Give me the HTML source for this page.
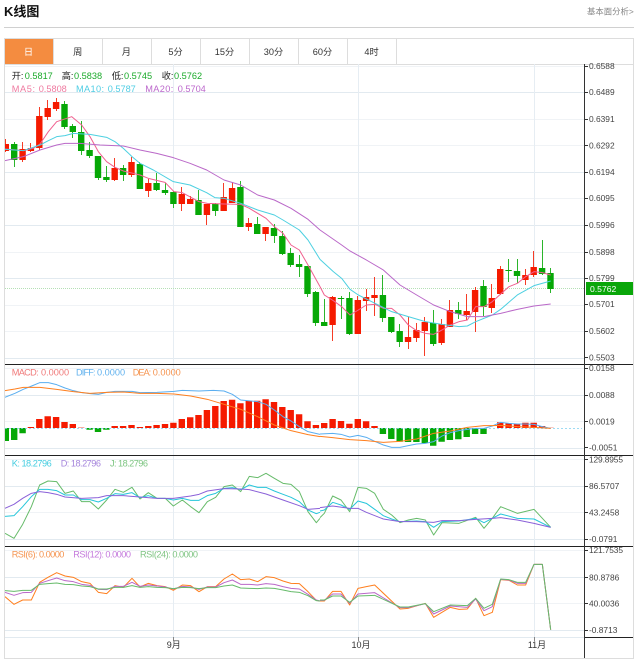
<!DOCTYPE html>
<html lang="zh"><head><meta charset="utf-8"><title>K线图</title>
<style>
html,body{margin:0;padding:0;background:#fff;width:637px;height:663px;overflow:hidden}
svg{position:absolute;left:0;top:0;display:block}
text{font-family:"Liberation Sans","Noto Sans CJK SC",sans-serif}
.ax text{font-size:8.4px;fill:#444}
.lg text{font-size:9.2px}
.tb text{font-size:9.2px;fill:#333;text-anchor:middle}
polyline{fill:none;stroke-width:1;vector-effect:non-scaling-stroke;stroke-linejoin:round}
</style></head><body>
<svg width="637" height="663" viewBox="0 0 637 663" xmlns="http://www.w3.org/2000/svg">
<defs><clipPath id="c"><rect x="5" y="64" width="579" height="574"/></clipPath></defs>
<text x="4" y="16" font-size="13" font-weight="bold" fill="#111">K线图</text>
<text x="587" y="14.5" font-size="8.4" fill="#888">基本面分析&gt;</text>
<path d="M4 27.5H634" stroke="#d0d0d0"/>

<!-- tabs -->
<rect x="4.5" y="38.5" width="629" height="26" fill="#fff" stroke="#ddd"/>
<rect x="5" y="39" width="48" height="25" fill="#f48c40"/>
<path d="M53.5 39V64M102.5 39V64M151.5 39V64M200.5 39V64M249.5 39V64M298.5 39V64M347.5 39V64M396.5 39V64" stroke="#ddd"/>
<g class="tb">
<text x="28.5" y="55.2" style="fill:#fff">日</text>
<text x="77.7" y="55.2">周</text><text x="126.3" y="55.2">月</text><text x="175.5" y="55.2">5分</text>
<text x="224.5" y="55.2">15分</text><text x="273.5" y="55.2">30分</text><text x="322.5" y="55.2">60分</text><text x="371.5" y="55.2">4时</text>
</g>

<!-- frame -->
<path d="M4.5 64V658.5H633.5V64" fill="none" stroke="#ddd"/>

<!-- grid -->
<path d="M5 92.5H584M5 172.5H584M5 225.5H584M5 278.5H584M5 358.5H584M5 395.5H584M5 448.5H584M5 486.5H584M5 539.5H584M5 577.5H584M5 630.5H584M5 637.5H584" stroke="#e2eaf0"/>
<path d="M5 66.5H584M5 119.5H584M5 145.5H584M5 198.5H584M5 252.5H584M5 305.5H584M5 331.5H584M5 368.5H584M5 421.5H584M5 459.5H584M5 512.5H584M5 550.5H584M5 603.5H584" stroke="#f0f3f6"/>
<path d="M173.5 64V637M358.5 64V637M534.5 64V637" stroke="#e6edf3"/>

<!-- dotted last price -->
<path d="M5 288.5H584" stroke="#b5e0b5" stroke-dasharray="1 1"/>

<g clip-path="url(#c)">
<!-- red wicks -->
<path stroke="#f51a00" stroke-width="1" fill="none" d="M5.5 139V152M22.5 142V162M30.5 143V152M39.5 107V150M47.5 100V120M56.5 98V111M114.5 158V181M131.5 157V177M148.5 179V197M181.5 187V211M190.5 196V204M206.5 204V225M223.5 183V211M232.5 182V203M248.5 218V231M265.5 227V241M332.5 296V341M357.5 296V334M366.5 289V311M374.5 277V316M408.5 317V349M416.5 323V342M424.5 317V356M441.5 319V345M449.5 300V327M466.5 294V320M475.5 287V332M491.5 284V313M500.5 266V295M525.5 269V285M533.5 251V277" opacity=".85"/>
<!-- red bodies -->
<path stroke="#f51a00" stroke-width="6.4" fill="none" d="M5.8 144V151M22.6 149V160M30.9 148V151M39.3 116V148M47.7 108V117M56.1 102V109M114.7 168V180M131.5 162V175M148.3 183V191M181.8 194V204M190.2 199V204M206.9 204V215M223.7 197V211M232.1 188V203M248.8 223V227M265.6 227V234M332.6 297V325M357.8 300V334M366.1 297V301M374.5 295V298M408 337V342M416.4 330V338M424.8 322V331M441.6 324V343M449.9 310V327M466.7 311V315M475.1 290V312M491.8 298V308M500.2 269V294M525.4 275V280M533.7 267V275"/>
<!-- green wicks -->
<path stroke="#06a806" stroke-width="1" fill="none" d="M14.5 142V167M64.5 101V129M72.5 124V138M81.5 121V155M89.5 142V158M98.5 156V180M106.5 166V182M123.5 165V181M139.5 162V189M156.5 173V191M165.5 183V195M173.5 191V208M198.5 190V215M215.5 203V216M240.5 181V227M257.5 217V234M274.5 224V243M282.5 231V255M290.5 248V267M299.5 255V277M307.5 266V297M315.5 291V326M324.5 299V326M341.5 296V319M349.5 292V335M382.5 275V322M391.5 317V333M399.5 324V347M433.5 310V346M458.5 302V319M483.5 280V316M508.5 259V282M517.5 259V283M542.5 240V275M550.5 268V293" opacity=".85"/>
<!-- green bodies -->
<path stroke="#06a806" stroke-width="6.4" fill="none" d="M14.2 144V160M64.5 104V127M72.8 126V132M81.2 132V151M89.6 150V156M98 156V178M106.4 177V180M123.1 168V175M139.9 164V189M156.6 183V190M165 190V193M173.4 192V204M198.5 200V215M215.3 204V211M240.4 187V227M257.2 224V234M274 228V236M282.3 236V254M290.7 253V265M299.1 264V267M307.5 266V294M315.9 292V323M324.2 322V326M341 298V299M349.4 298V334M382.9 295V318M391.3 317V332M399.7 331V342M433.2 323V344M458.3 310V314M483.5 286V307M508.6 270V271M517 271V276M542.1 268V274M550.5 273V289"/>

<!-- MA lines -->
<g transform="scale(.33333)">
<polyline stroke="#f0608f" points="15,447 70,452 100,445 120,432 145,395 170,365 215,350 245,375 270,410 295,455 320,485 345,502 370,513 420,525 445,535 495,547 522,575 547,578 597,605 622,610 672,612 722,613 748,625 798,655 823,680 849,700 873,735 898,750 924,795 960,860"/>
<polyline stroke="#4dd0e1" points="15,448 70,452 120,435 145,422 170,410 195,407 220,400 270,403 320,412 345,425 370,445 396,470 420,490 460,510 520,545 570,555 620,578 645,593 672,595 722,610 773,630 823,645 849,660 898,690 924,720 960,778"/>
<polyline stroke="#ba68c8" points="15,482 70,470 120,450 170,435 195,430 240,430 300,435 370,438 420,450 470,460 520,473 570,490 620,510 672,540 722,555 773,585 823,600 873,625 924,658 960,690"/>
</g>
<g transform="translate(320,170) scale(.33333)">
<polyline stroke="#f0608f" points="0,350 13,375 40,392 65,410 90,435 115,420 139,405 165,403 190,415 215,415 240,435 265,465 290,482 316,490 341,493 366,480 391,465 417,455 442,450 467,410 492,410 517,395 542,372 567,350 592,340 617,320 642,305 667,308 692,315"/>
<polyline stroke="#4dd0e1" points="0,268 40,305 65,325 90,358 115,375 165,400 215,425 265,440 316,455 366,463 417,470 442,468 467,455 517,435 542,418 592,375 642,347 692,333"/>
<polyline stroke="#ba68c8" points="0,180 65,225 90,243 139,270 190,300 240,345 290,375 341,405 391,425 442,440 492,440 542,430 592,418 642,408 692,402"/>
</g>

<!-- MACD bars -->
<path stroke="#f51a00" stroke-width="6.4" fill="none" d="M30.9 427V428M39.3 419V428M47.7 416.3V428M56.1 417V428M64.5 422V428M72.8 424V428M81.2 427.6V428M114.7 426V428M123.1 426V428M131.5 425V428M139.9 427V428M148.3 426V428M156.6 425V428M165 424V428M173.4 422.7V428M181.8 419V428M190.2 417.3V428M198.5 415V428M206.9 410V428M215.3 406V428M223.7 401V428M232.1 399.7V428M240.4 403.3V428M248.8 401V428M257.2 400.7V428M265.6 399.3V428M274 402V428M282.3 407V428M290.7 410V428M299.1 414.3V428M307.5 421.3V428M315.9 425V428M324.2 423V428M332.6 419V428M341 421V428M349.4 423.7V428M357.8 419V428M366.1 421.3V428M374.5 426V428M500.2 422.3V428M508.6 423V428M517 423.7V428M525.4 422.7V428M533.7 422.7V428M542.1 426V428M550.5 427.7V428"/>
<path stroke="#06a806" stroke-width="6.4" fill="none" d="M5.8 428V441M14.2 428V440M22.6 428V433.3M89.6 428V429.7M98 428V432M106.4 428V429.7M382.9 428V434M391.3 428V439M399.7 428V441.7M408 428V442M416.4 428V442M424.8 428V443M433.2 428V445.7M441.6 428V441.7M449.9 428V440M458.3 428V439.3M466.7 428V437M475.1 428V434M483.5 428V434"/>
<path d="M5 428.5H582" stroke="#7fd0f0" stroke-dasharray="2 2" stroke-width=".8"/>
<g transform="translate(0,360) scale(.33333)">
<polyline stroke="#5aaef0" points="15,112 45,100 70,88 95,78 119,68 145,68 170,74 195,84 220,92 245,98 270,101 295,103 320,97 345,94 396,94 420,98 471,97 522,94 547,91 597,93 640,91 672,93 697,103 722,120 773,125 798,133 823,150 849,170 873,183 898,200 924,215 960,223"/>
<polyline stroke="#ff7f1e" points="15,92 45,87 70,82 120,82 170,88 220,95 270,100 320,97 370,96 420,100 471,100 522,102 572,108 622,118 672,133 722,148 773,170 823,195 873,212 924,224 960,230"/>
</g>
<g transform="translate(320,360) scale(.33333)">
<polyline stroke="#5aaef0" points="0,222 38,220 63,223 89,231 114,226 139,232 164,244 190,255 215,262 240,262 265,257 290,252 316,250 341,245 366,228 391,218 417,212 442,208 467,205 492,205 517,198 542,187 567,190 592,192 617,192 642,193 667,200 692,205"/>
<polyline stroke="#ff7f1e" points="0,229 38,233 89,239 139,242 190,247 240,244 290,237 341,220 391,213 442,202 492,197 517,197 542,196 592,200 642,202 692,205"/>
</g>

<!-- KDJ -->
<g transform="translate(0,455) scale(.33333)">
<polyline stroke="#66bb6a" points="15,235 42,250 68,208 94,155 119,90 144,78 170,80 195,115 220,108 245,140 270,140 295,162 320,135 345,103 370,112 396,97 420,132 445,113 471,130 496,130 520,153 547,135 572,155 597,173 622,140 647,127 672,95 697,90 722,110 748,64 773,68 798,55 823,70 849,85 873,88 898,110 924,170 949,203 960,190"/>
<polyline stroke="#26c6da" points="15,184 42,182 68,155 94,125 119,103 144,103 170,107 195,120 220,120 245,134 270,134 295,141 320,130 345,116 370,118 396,113 420,128 445,122 471,130 496,130 520,135 547,130 572,136 597,136 622,122 647,115 672,100 697,98 722,104 748,90 773,97 798,97 823,108 849,118 873,127 898,140 924,165 949,176 960,172"/>
<polyline stroke="#8a60d8" points="15,160 42,148 68,130 94,115 119,110 144,113 170,118 195,126 245,130 295,128 320,122 370,122 420,126 471,130 520,130 572,123 597,118 622,108 672,101 722,102 748,104 798,117 849,135 898,152 924,163 960,160"/>
</g>
<g transform="translate(320,455) scale(.33333)">
<polyline stroke="#66bb6a" points="0,188 13,175 38,123 63,135 89,170 114,97 139,100 164,115 190,163 215,180 240,203 265,195 290,190 316,195 341,240 366,203 417,205 467,187 492,220 517,190 542,155 592,175 642,163 692,217"/>
<polyline stroke="#26c6da" points="0,168 13,165 38,142 63,150 89,163 114,138 139,145 164,163 190,182 215,192 240,200 290,198 316,200 341,217 366,200 417,198 467,190 492,203 517,190 542,177 592,190 642,192 692,217"/>
<polyline stroke="#8a60d8" points="0,158 38,153 89,160 114,160 139,172 190,192 240,200 290,200 341,202 366,197 417,197 467,193 517,190 542,188 592,195 642,205 692,217"/>
</g>

<!-- RSI -->
<g transform="translate(0,545) scale(.33333)">
<polyline stroke="#ff7f1e" points="15,155 42,178 68,165 94,165 119,112 144,97 170,83 195,93 220,97 245,110 270,115 295,142 320,146 345,122 370,127 396,100 420,126 445,115 471,122 496,125 520,136 547,120 572,122 597,140 622,125 647,125 672,102 697,87 722,104 748,102 773,110 798,95 823,98 849,108 873,115 898,116 924,140 949,166 960,168"/>
<polyline stroke="#ba68c8" points="15,142 42,151 68,143 94,142 119,115 144,107 170,99 195,107 220,110 245,118 270,121 295,133 320,134 345,124 370,124 396,112 420,124 445,120 471,123 496,126 520,132 547,124 572,126 597,133 622,126 647,126 672,113 697,105 722,118 748,118 773,120 798,116 823,118 849,125 873,130 898,132 924,148 949,165 960,168"/>
<polyline stroke="#66bb6a" points="15,137 42,139 68,136 94,136 119,118 144,116 170,114 195,118 220,119 245,123 270,125 295,132 320,132 345,127 370,127 396,122 420,127 445,125 471,127 496,128 520,131 547,127 572,128 597,131 622,128 647,128 672,123 697,120 722,129 748,130 773,131 798,129 823,130 849,135 873,140 898,142 924,152 949,167 960,168"/>
</g>
<g transform="translate(320,545) scale(.33333)">
<polyline stroke="#ff7f1e" points="0,168 13,168 38,139 63,139 89,180 114,130 139,125 164,120 240,192 265,190 316,175 341,217 366,202 391,187 417,193 442,192 467,160 492,212 517,202 542,104 567,106 592,120 617,120 642,58 667,58 692,254"/>
<polyline stroke="#ba68c8" points="0,166 13,166 38,147 63,147 89,175 114,147 164,143 240,188 265,188 316,176 341,207 391,183 442,187 467,162 492,197 517,185 542,103 567,105 592,115 617,115 642,58 667,58 692,254"/>
<polyline stroke="#66bb6a" points="0,165 13,165 38,153 63,153 89,172 114,153 164,151 240,186 265,186 316,176 341,200 391,180 442,182 467,160 492,190 517,178 542,102 567,104 592,112 617,112 642,58 667,58 692,254"/>
</g>
</g>

<!-- panel separators -->
<path d="M5 364.5H633M5 455.5H633M5 546.5H633M584 637.5H633" stroke="#222"/>
<!-- y axis -->
<path d="M584.5 64V658" stroke="#333"/>
<path d="M584 66.5h4M584 92.5h4M584 119.5h4M584 145.5h4M584 172.5h4M584 198.5h4M584 225.5h4M584 252.5h4M584 278.5h4M584 304.5h4M584 331.5h4M584 357.5h4M584 368.5h4M584 395.5h4M584 421.5h4M584 447.5h4M584 459.5h4M584 486.5h4M584 512.5h4M584 539.5h4M584 550.5h4M584 577.5h4M584 603.5h4M584 630.5h4" stroke="#333"/>
<path d="M173.5 637V641M358.5 637V641M534.5 637V641" stroke="#888"/>

<g class="ax">
<text x="589" y="69">0.6588</text><text x="589" y="95">0.6489</text><text x="589" y="122">0.6391</text><text x="589" y="148.300">0.6292</text>
<text x="589" y="175">0.6194</text><text x="589" y="201">0.6095</text><text x="589" y="228">0.5996</text><text x="589" y="255">0.5898</text>
<text x="589" y="281">0.5799</text><text x="589" y="307">0.5701</text><text x="589" y="334">0.5602</text><text x="589" y="360.500">0.5503</text>
<text x="589" y="371">0.0158</text><text x="589" y="398">0.0088</text><text x="589" y="424.700">0.0019</text><text x="589" y="450.700">-0.0051</text>
<text x="589" y="462.300" textLength="34">129.8955</text><text x="589" y="489">86.5707</text><text x="589" y="515.300">43.2458</text><text x="589" y="542">-0.0791</text>
<text x="589" y="553" textLength="34">121.7535</text><text x="589" y="580.300">80.8786</text><text x="589" y="606.700">40.0036</text><text x="589" y="633">-0.8713</text>
</g>

<!-- last price tag -->
<rect x="586" y="282" width="47" height="13" fill="#09a609"/>
<text x="590" y="291.8" font-size="8.6" fill="#fff">0.5762</text>

<!-- legends -->
<g class="lg">
<text x="11.700" y="79" fill="#222">开:</text><text x="24.700" y="79" fill="#1aaa2a">0.5817</text>
<text x="61.700" y="79" fill="#222">高:</text><text x="74" y="79" fill="#1aaa2a">0.5838</text>
<text x="111.700" y="79" fill="#222">低:</text><text x="124" y="79" fill="#1aaa2a">0.5745</text>
<text x="161.700" y="79" fill="#222">收:</text><text x="174" y="79" fill="#1aaa2a">0.5762</text>
<text x="11.700" y="92" fill="#ef7aa0" textLength="23.3">MA5:</text><text x="38.700" y="92" fill="#ef7aa0">0.5808</text>
<text x="76" y="92" fill="#4fcde4" textLength="28">MA10:</text><text x="107.700" y="92" fill="#4fcde4">0.5787</text>
<text x="145.300" y="92" fill="#bc68cc" textLength="28">MA20:</text><text x="177.700" y="92" fill="#bc68cc">0.5704</text>

<text x="11.700" y="375.300" fill="#f07a7a" textLength="27">MACD:</text><text x="41" y="375.300" fill="#f07a7a">0.0000</text>
<text x="76" y="375.300" fill="#62b2ee" textLength="19.500">DIFF:</text><text x="97" y="375.300" fill="#62b2ee">0.0000</text>
<text x="132.700" y="375.300" fill="#f59450" textLength="18.500">DEA:</text><text x="152.700" y="375.300" fill="#f59450">0.0000</text>

<text x="11.700" y="466.300" fill="#45cde0" textLength="40">K: 18.2796</text>
<text x="60.700" y="466.300" fill="#a585dc" textLength="40.300">D: 18.2796</text>
<text x="110" y="466.300" fill="#7cc580" textLength="38">J: 18.2796</text>

<text x="11.700" y="557.300" fill="#f59450" textLength="52.700">RSI(6): 0.0000</text>
<text x="73.300" y="557.300" fill="#c47adc" textLength="57.700">RSI(12): 0.0000</text>
<text x="140" y="557.300" fill="#80c584" textLength="58">RSI(24): 0.0000</text>
</g>

<!-- x labels -->
<g font-size="9" fill="#333" text-anchor="middle">
<text x="173.700" y="648">9月</text><text x="361" y="648">10月</text><text x="537" y="648">11月</text>
</g>
</svg>
</body></html>
